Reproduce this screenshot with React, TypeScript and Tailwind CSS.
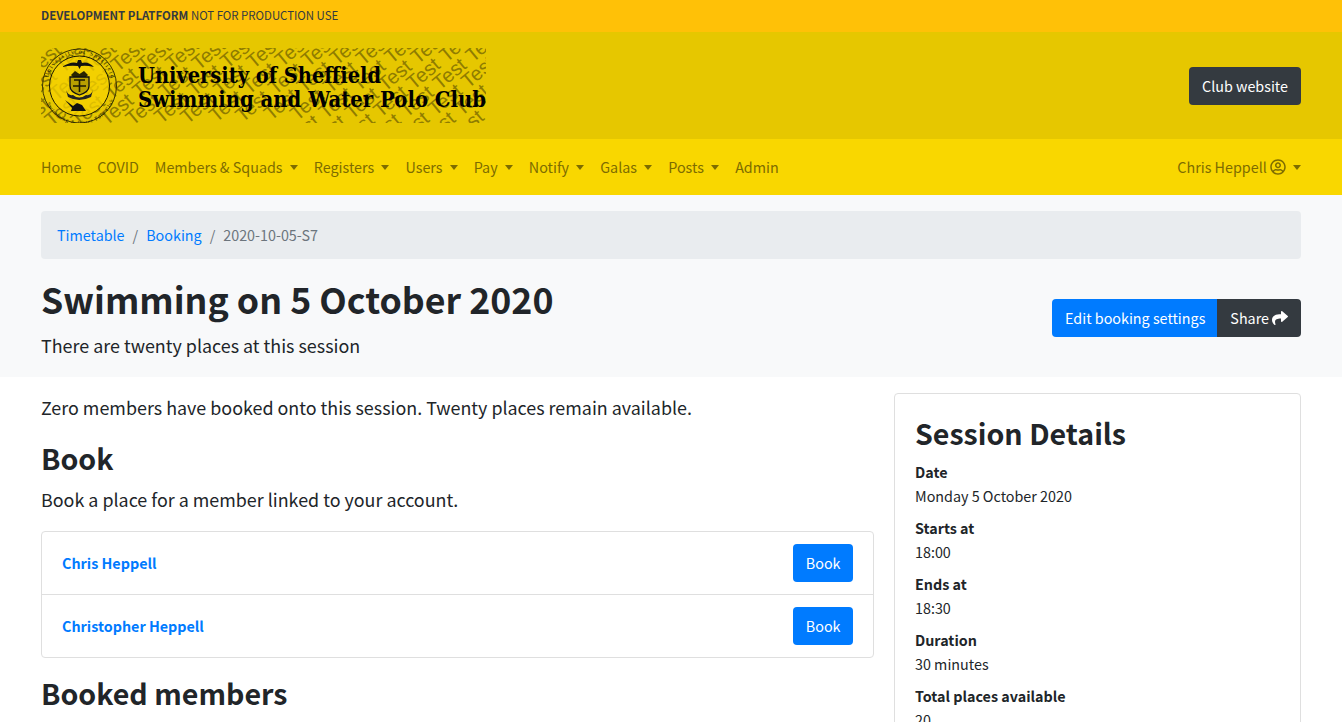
import { FaRegUserCircle } from "react-icons/fa";

const font = { fontFamily: '"Noto Sans CJK SC", "Noto Sans", sans-serif' };

const navItems = [
  { label: "Home" },
  { label: "COVID" },
  { label: "Members & Squads", caret: true },
  { label: "Registers", caret: true },
  { label: "Users", caret: true },
  { label: "Pay", caret: true },
  { label: "Notify", caret: true },
  { label: "Galas", caret: true },
  { label: "Posts", caret: true },
  { label: "Admin" },
];

const details = [
  ["Date", "Monday 5 October 2020"],
  ["Starts at", "18:00"],
  ["Ends at", "18:30"],
  ["Duration", "30 minutes"],
  ["Total places available", "20"],
];

const members = ["Chris Heppell", "Christopher Heppell"];

function Caret() {
  return <span className="ml-[7.2px] inline-block align-[3px] border-x-4 border-t-[5px] border-x-transparent border-t-current" />;
}

// watermark words on the logo, only the ones that land inside the image
function watermark() {
  const out: { x: number; y: number }[] = [];
  const a = (-40 * Math.PI) / 180;
  for (let r = -12; r < 30; r++) {
    for (let c = -6; c < 14; c++) {
      const x = c * 43 + (r % 2) * 20;
      const y = r * 17;
      const px = x * Math.cos(a) - y * Math.sin(a);
      const py = x * Math.sin(a) + y * Math.cos(a);
      if (px > -30 && px < 470 && py > -25 && py < 100) out.push({ x, y });
    }
  }
  return out;
}

function Logo() {
  return (
    <svg width="445" height="75" viewBox="0 0 445 75" className="block">
      {watermark().map((w) => (
        <text key={`${w.x}-${w.y}`} x={w.x} y={w.y} fontSize="20" fill="#8f7c00" fontFamily="Liberation Sans, sans-serif" transform="rotate(-40)">
          Test
        </text>
      ))}
      <defs>
        <path id="ringTop" d="M6 38 A32.5 32.5 0 0 1 71 38" />
        <path id="ringBottom" d="M2 40 A36.5 36.5 0 0 0 75 40" />
      </defs>
      <circle cx="38.5" cy="38" r="37" fill="none" stroke="#3a3300" strokeWidth="1" />
      <circle cx="38.5" cy="38" r="30" fill="#f7d300" fillOpacity="0.75" stroke="#1c1900" strokeWidth="1" />
      <text fontSize="6" fill="#1c1900" fontFamily="Liberation Serif, serif">
        <textPath href="#ringTop" startOffset="8" textLength="86">University of Sheffield</textPath>
      </text>
      <text fontSize="5.5" fill="#1c1900" fontFamily="Liberation Serif, serif">
        <textPath href="#ringBottom" startOffset="16" textLength="86">Swimming &amp; Water Polo Club</textPath>
      </text>
      <path d="M21 19 Q30 13 36 15 L37 12 L40 12 L41 15 Q47 13 53 19 Q45 17 40 18 L38.5 21 L37 18 Q29 17 21 19Z" fill="#111" />
      <path d="M30 27 L34 23 L38.5 26 L43 23 L47 27 L45 29 H32Z" fill="#2a2500" />
      <path d="M29 29 H48 V38 Q48 44 38.5 47 Q29 44 29 38Z" fill="#b8a000" stroke="#111" strokeWidth="1.3" />
      <path d="M33 32 H44 M38.5 32 V44 M32 38 H45" stroke="#1c1900" strokeWidth="1.6" />
      <path d="M25 42 Q27 48 32 47 Q38 52 45 47 Q50 48 52 42 L50 49 Q38 55 27 49Z" fill="#222" />
      <path d="M24 52 L32 58 L36 55 L41 57 L45 63 L30 63 L31 60Z" fill="#111" />
      <text x="97" y="35" fontSize="23" fontWeight="700" fill="#000" fontFamily="DejaVu Serif, serif" textLength="243" lengthAdjust="spacingAndGlyphs">University of Sheffield</text>
      <text x="97" y="59" fontSize="23" fontWeight="700" fill="#000" fontFamily="DejaVu Serif, serif" textLength="348" lengthAdjust="spacingAndGlyphs">Swimming and Water Polo Club</text>
    </svg>
  );
}

export default function App() {
  return (
    <div style={font} className="h-[722px] overflow-hidden bg-white text-[14.33px] leading-6 text-[#212529]">
      <div className="h-8 bg-[#ffc107] px-[41px] pt-[6px] text-[11.42px] leading-[12px]">
        <div className="pt-[3px] text-[#343a40]">
          <strong className="font-bold">DEVELOPMENT PLATFORM</strong> NOT FOR PRODUCTION USE
        </div>
      </div>

      <div className="flex h-[107px] items-center justify-between bg-[#e6c700] px-[41px]">
        <Logo />
        <button className="h-[38px] rounded bg-[#343a40] px-[13px] text-white">Club website</button>
      </div>

      <nav className="flex h-14 items-center justify-between bg-[#f9d700] px-[33px] text-[#7d6c00]">
        <div className="flex">
          {navItems.map((item) => (
            <span key={item.label} className="px-2 whitespace-nowrap">
              {item.label}
              {item.caret && <Caret />}
            </span>
          ))}
        </div>
        <span className="flex items-center px-2 whitespace-nowrap">
          Chris Heppell
          <FaRegUserCircle className="ml-[3px] size-4" />
          <Caret />
        </span>
      </nav>

      <div className="h-[182px] bg-[#f8f9fa] px-[41px] pt-4">
        <div className="flex h-12 items-center rounded bg-[#e9ecef] px-4">
          <a className="text-[#007bff]">Timetable</a>
          <span className="px-2 text-[#6c757d]">/</span>
          <a className="text-[#007bff]">Booking</a>
          <span className="px-2 text-[#6c757d]">/</span>
          <span className="text-[#6c757d]">2020-10-05-S7</span>
        </div>
        <div className="mt-4 flex items-start justify-between">
          <div>
            <h1 className="text-[35.7px] leading-[48px] font-bold">Swimming on 5 October 2020</h1>
            <p className="mt-[7px] text-[17.9px] leading-[30px]">There are twenty places at this session</p>
          </div>
          <div className="mt-6 flex">
            <button className="h-[38px] rounded-l bg-[#007bff] pr-[12px] pl-[13px] text-white">Edit booking settings</button>
            <button className="flex h-[38px] items-center gap-[3px] rounded-r bg-[#343a40] px-[13px] text-white">
              Share
              <svg viewBox="0 0 512 512" className="size-4" fill="currentColor">
                <path d="M503.7 189.8 327.7 37.9C312.3 24.6 288 35.4 288 56v80.1C127.4 137.9 0 170.1 0 322.3c0 61.4 39.6 122.3 83.3 154.1 13.7 9.9 33.1-2.5 28.1-18.6C66 312.6 132.9 274.3 288 272.1V360c0 20.7 24.3 31.5 39.7 18.2l176-152c11.1-9.6 11.1-26.8 0-36.4z" />
              </svg>
            </button>
          </div>
        </div>
      </div>

      <div className="flex gap-[20px] px-[41px] pt-4">
        <main className="-mt-px w-[833px] shrink-0">
          <p className="text-[17.9px] leading-[30px]">Zero members have booked onto this session. Twenty places remain available.</p>
          <h2 className="mt-[17px] text-[28.6px] leading-[38px] font-bold">Book</h2>
          <p className="mt-[7px] text-[17.9px] leading-[30px]">Book a place for a member linked to your account.</p>
          <div className="mt-[17px] rounded border border-[#dfdfdf] bg-white">
            {members.map((name, i) => (
              <div key={name} className={`flex items-center justify-between px-5 py-3 ${i ? "border-t border-[#dfdfdf]" : "h-[62px]"}`}>
                <a className="font-bold text-[#007bff]">{name}</a>
                <button className="h-[38px] rounded bg-[#007bff] px-[12.5px] text-white">Book</button>
              </div>
            ))}
          </div>
          <h2 className="mt-4 text-[28.6px] leading-[38px] font-bold">Booked members</h2>
        </main>

        <aside className="h-[400px] w-[407px] shrink-0 rounded border border-[#dfdfdf] bg-white px-5 pt-5">
          <h2 className="mb-2 text-[28.6px] leading-[38px] font-bold">Session Details</h2>
          {details.map(([label, value]) => (
            <div key={label} className="mb-2">
              <div className="font-bold">{label}</div>
              <div>{value}</div>
            </div>
          ))}
        </aside>
      </div>
    </div>
  );
}
